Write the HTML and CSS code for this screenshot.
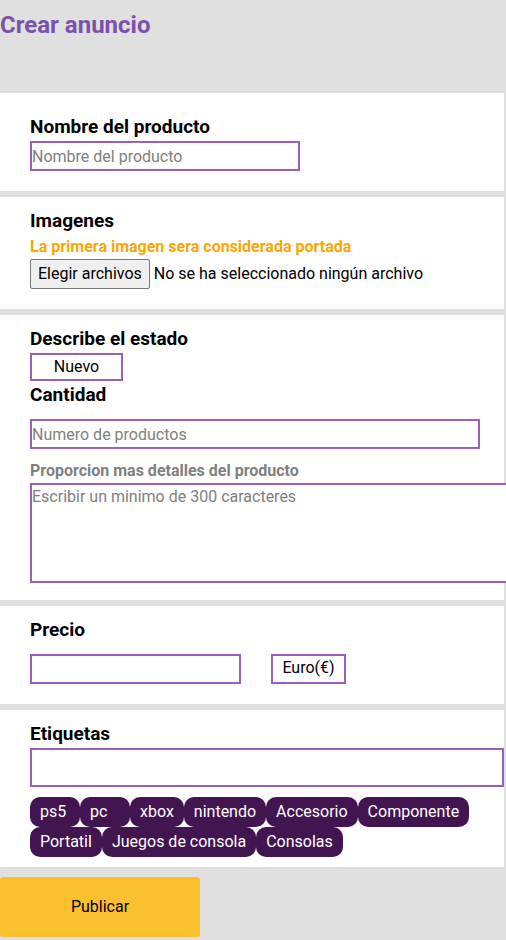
FILE: index.html
```html
<!DOCTYPE html>
<html lang="es">
<head>
<meta charset="utf-8">
<meta name="viewport" content="width=device-width, initial-scale=1">
<title>Crear anuncio</title>
<link rel="stylesheet" href="styles.css">
</head>
<body>
<h1 class="page-title">Crear anuncio</h1>
<form class="form">
  <section class="card card-first">
    <label class="heading" for="nombre">Nombre del producto</label>
    <input class="field field-name" id="nombre" type="text" placeholder="Nombre del producto">
  </section>

  <section class="card">
    <h2 class="heading">Imagenes</h2>
    <p class="note note-warning">La primera imagen sera considerada portada</p>
    <div class="file-row">
      <input class="file-input" id="imagenes" type="file" multiple>
      <label class="file-button" for="imagenes">Elegir archivos</label>
      <span>No se ha seleccionado ningún archivo</span>
    </div>
  </section>

  <section class="card card-details">
    <label class="heading" for="estado">Describe el estado</label>
    <select class="field select select-state" id="estado">
      <option>Nuevo</option>
    </select>
    <label class="heading" for="cantidad">Cantidad</label>
    <input class="field field-quantity" id="cantidad" type="text" placeholder="Numero de productos">
    <label class="note note-muted" for="detalles">Proporcion mas detalles del producto</label>
    <textarea class="field field-details" id="detalles" placeholder="Escribir un minimo de 300 caracteres"></textarea>
  </section>

  <section class="card">
    <label class="heading" for="precio">Precio</label>
    <div class="price-row">
      <input class="field field-price" id="precio" type="text">
      <select class="field select select-currency" aria-label="Moneda">
        <option>Euro(€)</option>
      </select>
    </div>
  </section>

  <section class="card card-tags">
    <label class="heading" for="etiquetas">Etiquetas</label>
    <input class="field field-tags" id="etiquetas" type="text">
    <div class="tags">
      <button class="tag" type="button">ps5</button>
      <button class="tag" type="button">pc</button>
      <button class="tag" type="button">xbox</button>
      <button class="tag" type="button">nintendo</button>
      <button class="tag" type="button">Accesorio</button>
      <button class="tag" type="button">Componente</button>
      <button class="tag" type="button">Portatil</button>
      <button class="tag" type="button">Juegos de consola</button>
      <button class="tag" type="button">Consolas</button>
    </div>
  </section>

  <button class="submit" type="submit">Publicar</button>
</form>
</body>
</html>
```
FILE: styles.css
```css
* {
  box-sizing: border-box;
}

body {
  margin: 0;
  background: #e0e0e0;
  color: #000;
  font-family: Roboto, sans-serif;
  font-size: 16px;
  line-height: 24px;
  overflow-x: hidden;
}

input,
select,
textarea,
button {
  margin: 0;
  color: inherit;
  font: inherit;
}

.page-title {
  margin: 0;
  padding: 11px 0 54px;
  color: #7b52ab;
  font-size: 24px;
  line-height: 28px;
}

.form {
  display: flex;
  flex-direction: column;
  gap: 6px;
  margin-right: 2px;
}

.card {
  display: flex;
  flex-direction: column;
  align-items: flex-start;
  padding: 10px 0 20px 30px;
  background: #fff;
}

.card-first {
  padding-top: 20px;
}

.card-details {
  padding-bottom: 17px;
}

.card-tags {
  padding-bottom: 10px;
}

.heading {
  margin: 0;
  font-size: 19px;
  font-weight: 700;
  line-height: 28px;
}

.note {
  margin: 0;
  font-weight: 700;
}

.note-warning {
  color: orange;
}

.note-muted {
  color: gray;
}

.field {
  height: 30px;
  padding: 0;
  border: 2px solid #9b5fc0;
  border-radius: 0;
  background: #fff;
  outline: none;
}

.field::placeholder {
  color: gray;
}

.field-name {
  width: 270px;
  max-width: 100%;
}

.field-quantity {
  width: 95%;
  margin: 10px 0;
}

.field-details {
  width: calc(100% + 2px);
  height: 100px;
  border-right: 0;
  resize: none;
}

.select {
  appearance: none;
  padding-bottom: 2px;
  text-align: center;
  text-align-last: center;
}

.select-state {
  width: 93px;
  height: 28px;
}

.select-currency {
  width: 75px;
}

.file-row {
  display: flex;
  align-items: center;
  gap: 4px;
}

.file-input {
  position: absolute;
  width: 1px;
  height: 1px;
  opacity: 0;
}

.file-button {
  padding: 2px 7px;
  border: 1px solid #767676;
  border-radius: 2px;
  background: #efefef;
}

.price-row {
  display: flex;
  gap: 30px;
  margin-top: 10px;
}

.field-price {
  width: 211px;
}

.field-tags {
  width: 100%;
  height: 39px;
}

.tags {
  display: flex;
  flex-wrap: wrap;
  margin-top: 10px;
  padding-right: 30px;
}

.tag {
  min-width: 50px;
  height: 30px;
  padding: 0 10px;
  border: 0;
  border-radius: 10px;
  background: #421551;
  color: #fff;
  text-align: left;
}

.submit {
  width: 200px;
  height: 60px;
  margin: 4px 0 3px;
  border: 0;
  border-radius: 3px;
  background: #fbc02d;
}
```
